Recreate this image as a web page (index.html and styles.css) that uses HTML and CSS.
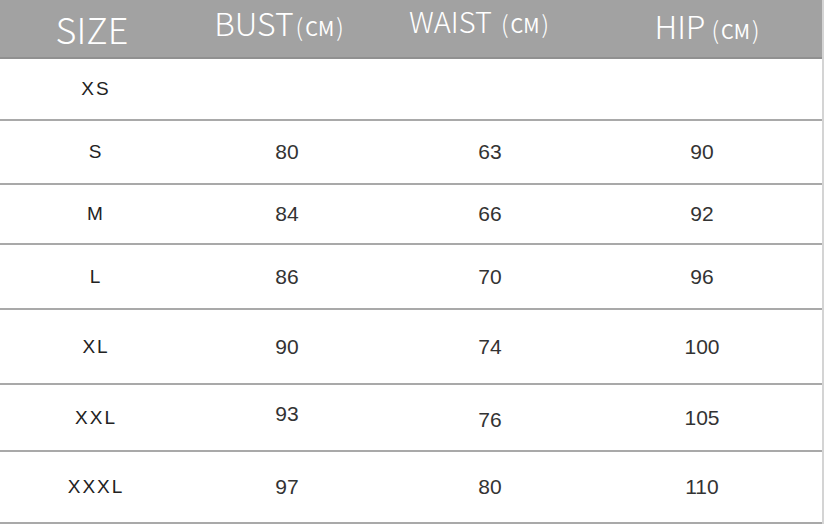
FILE: index.html
```html
<!DOCTYPE html>
<html>
<head>
<meta charset="utf-8">
<link rel="stylesheet" href="styles.css">
</head>
<body>
<div class="chart">
  <div class="head">
    <div class="hc c1"><span class="big">SIZE</span></div>
    <div class="hc c2"><span class="mid">BUST</span><span class="par">(</span><span class="unit">CM</span><span class="par">)</span></div>
    <div class="hc c3"><span class="mid w">WAIST</span><span class="par sp">(</span><span class="unit">CM</span><span class="par">)</span></div>
    <div class="hc c4"><span class="mid">HIP</span><span class="par sp2">(</span><span class="unit">CM</span><span class="par">)</span></div>
  </div>
  <div class="row r1"><div class="sz">XS</div><div class="n"></div><div class="n"></div><div class="n"></div></div>
  <div class="row r2"><div class="sz">S</div><div class="n">80</div><div class="n">63</div><div class="n">90</div></div>
  <div class="row r3"><div class="sz">M</div><div class="n">84</div><div class="n">66</div><div class="n">92</div></div>
  <div class="row r4"><div class="sz">L</div><div class="n">86</div><div class="n">70</div><div class="n">96</div></div>
  <div class="row r5"><div class="sz">XL</div><div class="n">90</div><div class="n">74</div><div class="n">100</div></div>
  <div class="row r6"><div class="sz">XXL</div><div class="n up">93</div><div class="n dn">76</div><div class="n">105</div></div>
  <div class="row r7"><div class="sz">XXXL</div><div class="n">97</div><div class="n">80</div><div class="n">110</div></div>
</div>
</body>
</html>
```
FILE: styles.css
```css
html, body {
  margin: 0;
  padding: 0;
  background: #ffffff;
}
.chart {
  width: 822px;
  border-right: 2px solid #d4d4d4;
  background: #fff;
}
.head {
  display: grid;
  grid-template-columns: 190px 194px 212px 212px 1fr;
  height: 57px;
  background: #a2a2a2;
  border-bottom: 2px solid #909090;
  color: #fff;
  font-family: "Noto Sans CJK SC", "Noto Sans", sans-serif;
  font-weight: 300;
}
.hc {
  display: flex;
  align-items: baseline;
  justify-content: center;
  white-space: pre;
  padding-top: 8px;
}
.hc.c1 { padding-right: 6px; padding-top: 10px; }
.hc.c2 { padding-right: 14px; padding-top: 6px; }
.hc.c3 { padding-right: 20px; padding-top: 6px; }
.hc.c4 { padding-left: 12px; padding-top: 9px; }
.big { font-size: 36px; line-height: 1; }
.mid { font-size: 32px; line-height: 1; }
.mid.w { font-size: 29px; }
.par { font-size: 24px; line-height: 1; margin: 0 2px; }
.par.sp { margin-left: 9px; }
.par.sp2 { margin-left: 6px; }
.unit { font-size: 20px; line-height: 1; font-weight: 400; }
.row {
  display: grid;
  grid-template-columns: 190px 194px 212px 212px 1fr;
  align-items: center;
  border-bottom: 2px solid #a9a9a9;
}
.r1 { height: 60px; }
.r2 { height: 62px; }
.r3 { height: 58px; }
.r4 { height: 63px; }
.r5 { height: 73px; }
.r6 { height: 65px; }
.r7 { height: 70px; }
.sz {
  text-align: center;
  font-family: "Liberation Sans", Arial, sans-serif;
  font-size: 19px;
  letter-spacing: 2px;
  padding-left: 2px;
  color: #222;
}
.n {
  text-align: center;
  font-family: "Liberation Sans", Arial, sans-serif;
  font-size: 21px;
  color: #333;
}
.n.up { padding-bottom: 8px; }
.n.dn { padding-top: 4px; }
```
